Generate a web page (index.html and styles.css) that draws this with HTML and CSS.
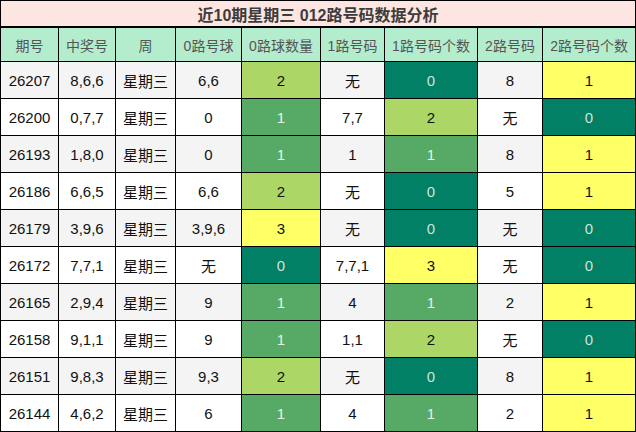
FILE: index.html
```html
<!DOCTYPE html>
<html lang="zh">
<head>
<meta charset="utf-8">
<title>近10期星期三 012路号码数据分析</title>
<link rel="stylesheet" href="styles.css">
</head>
<body>
<table class="grid">
  <colgroup>
    <col class="c1"><col class="c2"><col class="c3"><col class="c4"><col class="c5"><col class="c6"><col class="c7"><col class="c8"><col class="c9">
  </colgroup>
  <thead>
    <tr class="title"><th colspan="9">近10期星期三 012路号码数据分析</th></tr>
    <tr class="head">
      <th>期号</th><th>中奖号</th><th>周</th><th>0路号球</th><th>0路球数量</th><th>1路号码</th><th>1路号码个数</th><th>2路号码</th><th>2路号码个数</th>
    </tr>
  </thead>
  <tbody>
    <tr class="alt"><td>26207</td><td>8,6,6</td><td>星期三</td><td>6,6</td><td class="lg">2</td><td>无</td><td class="dg">0</td><td>8</td><td class="yl">1</td></tr>
    <tr><td>26200</td><td>0,7,7</td><td>星期三</td><td>0</td><td class="mg">1</td><td>7,7</td><td class="lg">2</td><td>无</td><td class="dg">0</td></tr>
    <tr class="alt"><td>26193</td><td>1,8,0</td><td>星期三</td><td>0</td><td class="mg">1</td><td>1</td><td class="mg">1</td><td>8</td><td class="yl">1</td></tr>
    <tr><td>26186</td><td>6,6,5</td><td>星期三</td><td>6,6</td><td class="lg">2</td><td>无</td><td class="dg">0</td><td>5</td><td class="yl">1</td></tr>
    <tr class="alt"><td>26179</td><td>3,9,6</td><td>星期三</td><td>3,9,6</td><td class="yl">3</td><td>无</td><td class="dg">0</td><td>无</td><td class="dg">0</td></tr>
    <tr><td>26172</td><td>7,7,1</td><td>星期三</td><td>无</td><td class="dg">0</td><td>7,7,1</td><td class="yl">3</td><td>无</td><td class="dg">0</td></tr>
    <tr class="alt"><td>26165</td><td>2,9,4</td><td>星期三</td><td>9</td><td class="mg">1</td><td>4</td><td class="mg">1</td><td>2</td><td class="yl">1</td></tr>
    <tr><td>26158</td><td>9,1,1</td><td>星期三</td><td>9</td><td class="mg">1</td><td>1,1</td><td class="lg">2</td><td>无</td><td class="dg">0</td></tr>
    <tr class="alt"><td>26151</td><td>9,8,3</td><td>星期三</td><td>9,3</td><td class="lg">2</td><td>无</td><td class="dg">0</td><td>8</td><td class="yl">1</td></tr>
    <tr><td>26144</td><td>4,6,2</td><td>星期三</td><td>6</td><td class="mg">1</td><td>4</td><td class="mg">1</td><td>2</td><td class="yl">1</td></tr>
  </tbody>
</table>
</body>
</html>
```
FILE: styles.css
```css
html, body {
  margin: 0;
  padding: 0;
  background: #ffffff;
}

.grid {
  border-collapse: collapse;
  table-layout: fixed;
  width: 635px;
  font-family: "Liberation Sans", "Noto Sans CJK SC", sans-serif;
  color: #111;
}

.c1 { width: 58px; }
.c2 { width: 57px; }
.c3 { width: 60px; }
.c4 { width: 66px; }
.c5 { width: 79px; }
.c6 { width: 64px; }
.c7 { width: 93px; }
.c8 { width: 65px; }
.c9 { width: 93px; }

.grid th, .grid td {
  border: 1px solid #000;
  padding: 0;
  text-align: center;
  vertical-align: middle;
  white-space: nowrap;
  overflow: hidden;
}

.title th {
  height: 25px;
  background: #fde6e1;
  color: #3c3c3c;
  font-size: 16px;
  font-weight: bold;
  border-bottom-width: 2px;
}

.head th {
  height: 33px;
  background: #b4ecce;
  color: #555;
  font-size: 14px;
  font-weight: normal;
}

.grid td {
  height: 36px;
  font-size: 15px;
  background: #ffffff;
}

.grid tr.alt td {
  background: #f4f4f4;
}

.grid tr td.dg { background: #018066; color: #cfe3dc; }
.grid tr td.mg { background: #56aa66; color: #e6f2e8; }
.grid tr td.lg { background: #acd666; color: #111; }
.grid tr td.yl { background: #ffff66; color: #111; }
```
